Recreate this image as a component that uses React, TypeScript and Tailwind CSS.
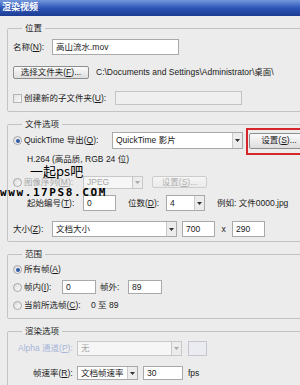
import React from 'react';

const Arrow = ({ disabled = false }: { disabled?: boolean }) => (
  <div className="w-[10px] h-full flex items-center justify-center bg-[#ececec] border-l border-[#c9c9c9]">
    <svg width="5" height="3" viewBox="0 0 5 3">
      <path d="M0 0h5L2.5 3z" fill={disabled ? '#a8a8a8' : '#303030'} />
    </svg>
  </div>
);

const Select = ({ value, className, disabled = false }: { value: string; className: string; disabled?: boolean }) => (
  <div
    className={`flex items-stretch border ${disabled ? 'border-[#c8c8c8] bg-[#f6f6f6] text-[#a8a8a8]' : 'border-[#a9a9a9] bg-white text-[#1a1a1a]'} ${className}`}
  >
    <div className="flex-1 flex items-center pl-[3px] overflow-hidden whitespace-nowrap">{value}</div>
    <Arrow disabled={disabled} />
  </div>
);

const Input = ({ value, className }: { value?: string; className: string }) => (
  <div className={`flex items-center pl-[3px] border border-[#a9a9a9] bg-white ${className}`}>{value}</div>
);

const Button = ({ children, className, disabled = false }: { children: React.ReactNode; className: string; disabled?: boolean }) => (
  <div
    className={`flex items-center justify-center rounded-[2px] border whitespace-nowrap bg-linear-to-b ${
      disabled ? 'border-[#cdcdcd] from-[#f5f5f5] to-[#ebebeb] text-[#b0b0b0]' : 'border-[#8e8e8e] from-[#fbfbfb] to-[#dedede] text-[#1a1a1a]'
    } ${className}`}
  >
    {children}
  </div>
);

const Radio = ({ checked = false }: { checked?: boolean }) => (
  <div className="w-[9px] h-[9px] mr-[2px] rounded-full border border-[#a7a7a7] bg-linear-to-br from-[#dcdcdc] to-[#fafafa] flex items-center justify-center shrink-0">
    {checked && <div className="w-[4px] h-[4px] rounded-full bg-[#2f5aa8]" />}
  </div>
);

const Group = ({ title, children, className }: { title: string; children: React.ReactNode; className: string }) => (
  <fieldset className={`ml-[7px] w-[330px] border border-[#c3c3c3] rounded-[2px] pl-[5px] ${className}`}>
    <legend className="ml-[9px] px-[3px] leading-[13px] text-[#1a1a1a]">{title}</legend>
    {children}
  </fieldset>
);

export default function App() {
  return (
    <div className="relative w-[300px] h-[385px] overflow-hidden bg-[#ececec] text-[8.5px] text-[#1a1a1a] font-['Liberation_Sans','Noto_Sans_CJK_SC',sans-serif]">
      {/* title bar */}
      <div className="h-[16px] bg-linear-to-b from-[#7397dc] via-[#2d56b7] to-[#1c3c93] flex items-center pl-[2px]">
        <span className="text-white font-bold text-[9px]">渲染视频</span>
      </div>

      {/* 位置 */}
      <Group title="位置" className="mt-[6px] pb-[6px]">
        <div className="mt-[4px] h-[16px] flex items-center">
          <span className="w-[39px]">名称(<u>N</u>):</span>
          <Input value="高山流水.mov" className="w-[127px] h-[16px]" />
        </div>
        <div className="mt-[11px] h-[13px] flex items-center">
          <Button className="w-[76px] h-[13px]">选择文件夹(<u>F</u>)...</Button>
          <span className="ml-[7px] whitespace-nowrap">C:\Documents and Settings\Administrator\桌面\</span>
        </div>
        <div className="mt-[12px] h-[14px] flex items-center">
          <div className="w-[9px] h-[9px] mr-[2px] border border-[#b5b5b5] bg-linear-to-br from-[#e2e2e2] to-[#fafafa]" />
          <span className="w-[91px]">创建新的子文件夹(<u>U</u>):</span>
          <div className="w-[127px] h-[14px] border border-[#c4c4c4] bg-[#efefef]" />
        </div>
      </Group>

      {/* 文件选项 */}
      <Group title="文件选项" className="mt-[6px] pb-[4px]">
        <div className="mt-[1px] h-[17px] flex items-center">
          <Radio checked />
          <span className="w-[88px] whitespace-nowrap">QuickTime 导出(<u>Q</u>):</span>
          <Select value="QuickTime 影片" className="w-[131px] h-[17px]" />
          <div className="relative ml-[6px]">
            <Button className="w-[60px] h-[16px]">设置(<u>S</u>)...</Button>
            <div className="absolute left-[-3px] top-[-5px] bottom-[-6px] w-[80px] border-2 border-[#d6252b]" />
          </div>
        </div>
        <div className="mt-[4px] h-[13px] flex items-center pl-[14px]">H.264 (高品质, RGB 24 位)</div>
        <div className="mt-[9px] h-[14px] flex items-center text-[#a8a8a8]">
          <Radio />
          <span className="w-[59px]">图像序列(<u>M</u>):</span>
          <Select disabled value="JPEG" className="w-[60px] h-[13px]" />
          <Button disabled className="ml-[9px] w-[55px] h-[12px]">设置(<u>S</u>)...</Button>
        </div>
        <div className="mt-[6px] h-[16px] flex items-center pl-[14px]">
          <span className="w-[56px]">起始编号(<u>T</u>):</span>
          <Input value="0" className="w-[33px] h-[16px]" />
          <span className="ml-[12px] w-[38px]">位数(<u>D</u>):</span>
          <Select value="4" className="w-[39px] h-[16px]" />
          <span className="ml-[12px] whitespace-nowrap">例如: 文件0000.jpg</span>
        </div>
        <div className="mt-[10px] h-[16px] flex items-center">
          <span className="w-[39px]">大小(<u>Z</u>):</span>
          <Select value="文档大小" className="w-[125px] h-[16px]" />
          <Input value="700" className="ml-[5px] w-[33px] h-[16px]" />
          <span className="w-[17px] text-center">x</span>
          <Input value="290" className="w-[33px] h-[16px]" />
        </div>
      </Group>

      {/* 范围 */}
      <Group title="范围" className="mt-[6px] pb-[6px]">
        <div className="mt-[2px] h-[13px] flex items-center">
          <Radio checked />
          <span>所有帧(<u>A</u>)</span>
        </div>
        <div className="mt-[4px] h-[14px] flex items-center">
          <Radio />
          <span className="w-[38px]">帧内(<u>I</u>):</span>
          <Input value="0" className="w-[34px] h-[14px]" />
          <span className="ml-[4px] w-[28px]">帧外:</span>
          <Input value="89" className="w-[34px] h-[14px]" />
        </div>
        <div className="mt-[5px] h-[13px] flex items-center">
          <Radio />
          <span className="w-[67px]">当前所选帧(<u>C</u>):</span>
          <span>0 至 89</span>
        </div>
      </Group>

      {/* 渲染选项 */}
      <Group title="渲染选项" className="mt-[6px] pb-[6px]">
        <div className="mt-[3px] h-[15px] flex items-center pl-[5px]">
          <span className="w-[59px] text-[#a9b6d8] whitespace-nowrap">Alpha 通道(<u>P</u>):</span>
          <Select disabled value="无" className="w-[105px] h-[15px]" />
          <div className="ml-[6px] w-[19px] h-[15px] border border-[#c6c6cc] bg-[#ebebf2]" />
        </div>
        <div className="mt-[10px] h-[14px] flex items-center pl-[20px]">
          <span className="w-[44px]">帧速率(<u>R</u>):</span>
          <Select value="文档帧速率" className="w-[61px] h-[14px]" />
          <Input value="30" className="ml-[5px] w-[40px] h-[14px]" />
          <span className="ml-[5px]">fps</span>
        </div>
      </Group>

      {/* watermark over the dialog */}
      <div className="absolute left-0 top-[163px] flex flex-col text-black">
        <div className="ml-[30px] h-[15px] text-[13px] leading-[15px] font-['Noto_Sans_CJK_SC',sans-serif]">一起ps吧</div>
        <div className="mt-[9px] h-[12px] text-[11px] leading-[12px] font-bold tracking-[1.6px] font-['DejaVu_Sans_Mono',monospace]">
          www.17PS8.COM
        </div>
      </div>
    </div>
  );
}
